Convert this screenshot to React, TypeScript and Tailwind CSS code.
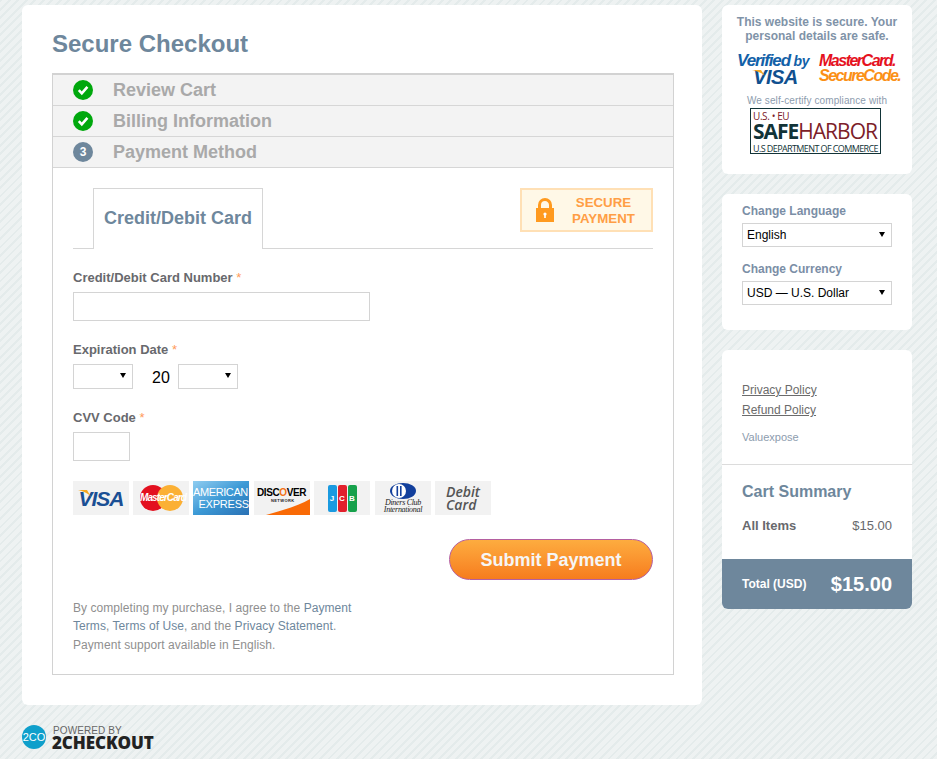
const FONT = "font-['Liberation_Sans',Arial,sans-serif]";

function CheckBadge() {
  return (
    <svg width="20" height="20" viewBox="0 0 20 20" className="shrink-0">
      <circle cx="10" cy="10" r="10" fill="#00a80d" />
      <path d="M5.8 10.2 L8.8 13.4 L14.4 6.9" fill="none" stroke="#fff" strokeWidth="2.6" />
    </svg>
  );
}

function Step({ label, badge }: { label: string; badge: React.ReactNode }) {
  return (
    <div className="h-[31px] bg-[#f3f3f3] border-b border-[#d6d6d6] flex items-center pl-5">
      <div className="w-10 shrink-0">{badge}</div>
      <span className="text-[18px] font-bold text-[#a9a9a9]">{label}</span>
    </div>
  );
}

function Select({ value, className }: { value: string; className: string }) {
  return (
    <div className={`relative ${className}`}>
      <select className="block w-full h-full appearance-none bg-white border border-[#d4d4d4] pl-1 text-[12px] text-black outline-none rounded-none" defaultValue={value}>
        <option value={value}>{value}</option>
      </select>
      <span className="absolute right-[7px] top-[9px] w-0 h-0 border-x-[3.5px] border-x-transparent border-t-[5px] border-t-black pointer-events-none" />
    </div>
  );
}

function Label({ text, req }: { text: string; req?: boolean }) {
  return (
    <div className="text-[13px] font-bold leading-[16px] text-[#68696d]">
      {text}
      {req && <span className="font-normal text-[#ff9a5a]"> *</span>}
    </div>
  );
}

function CardTile({ children, className = 'bg-[#f2f2f2]' }: { children: React.ReactNode; className?: string }) {
  return <div className={`relative w-14 h-[34px] overflow-hidden flex items-center justify-center ${className}`}>{children}</div>;
}

function CardLogos() {
  return (
    <div className="flex gap-1 mt-5">
      <CardTile>
        <span className="text-[21px] leading-none font-bold italic tracking-[-1px] text-[#1a4f94]">VISA</span>
        <svg width="14" height="8" viewBox="0 0 14 8" className="absolute left-[5px] top-[9px]">
          <path d="M0 0 H9 L13 7 C10 3 5 1 0 0Z" fill="#f7a823" />
        </svg>
      </CardTile>
      <CardTile>
        <span className="absolute left-[7px] top-[4px] w-[26px] h-[26px] rounded-full bg-[#e3101f]" />
        <span className="absolute left-[24px] top-[4px] w-[26px] h-[26px] rounded-full bg-[#fbb034]" />
        <span className="absolute left-[7px] top-[11px] text-[10px] leading-[12px] font-bold italic tracking-[-0.9px] text-white">MasterCard</span>
      </CardTile>
      <CardTile className="bg-gradient-to-br from-[#8fcdf0] via-[#3c9ad6] to-[#2b71b4]">
        <div className="absolute left-0 top-[6px] text-[11px] leading-[11px] tracking-[-0.4px] text-white">AMERICAN</div>
        <div className="absolute right-0 top-[18px] text-[11px] leading-[11px] tracking-[-0.2px] text-white">EXPRESS</div>
      </CardTile>
      <CardTile className="bg-[#f2f2f2] ml-px">
        <span className="absolute left-[3px] top-[6px] text-[10px] leading-[11px] font-bold tracking-[-0.4px] text-black">DISC<span className="text-[#f47216]">O</span>VER</span>
        <span className="absolute left-[17px] top-[17px] text-[4px] leading-[5px] font-bold tracking-[0.4px] text-[#222]">NETWORK</span>
        <svg width="56" height="34" viewBox="0 0 56 34" className="absolute inset-0">
          <path d="M12 34 C30 29 46 24 56 18 V34Z" fill="#f96a06" />
        </svg>
      </CardTile>
      <CardTile>
        <div className="flex gap-px">
          <div className="w-[9px] h-[27px] rounded-[2px] bg-[#1a9ae0] text-white text-[8px] leading-[27px] text-center font-bold">J</div>
          <div className="w-[9px] h-[27px] rounded-[2px] bg-[#e2202c] text-white text-[8px] leading-[27px] text-center font-bold">C</div>
          <div className="w-[9px] h-[27px] rounded-[2px] bg-[#16a14b] text-white text-[8px] leading-[27px] text-center font-bold">B</div>
        </div>
      </CardTile>
      <CardTile className="bg-[#f2f2f2] ml-px">
        <svg width="26" height="16" viewBox="0 0 26 16" className="absolute left-[15px] top-[2px]">
          <ellipse cx="13" cy="8" rx="13" ry="8" fill="#123f9c" />
          <circle cx="9" cy="8" r="7" fill="#fff" />
          <rect x="6.5" y="3" width="1.6" height="10" fill="#123f9c" />
          <rect x="10" y="3" width="1.6" height="10" fill="#123f9c" />
        </svg>
        <div className="absolute left-0 right-0 top-[18px] text-center font-['Liberation_Serif',serif] italic text-[8px] leading-[7px] tracking-[-0.3px] text-[#222]">
          Diners Club<br />International
        </div>
      </CardTile>
      <CardTile>
        <div className="font-['Open_Sans',sans-serif] text-[14px] leading-[13px] italic font-semibold text-[#555] text-left">
          Debit<br />Card
        </div>
      </CardTile>
    </div>
  );
}

function TrustCard() {
  return (
    <div className="bg-white rounded-[6px] h-[169px] pt-[10px] flex flex-col items-center">
      <p className="text-[12px] font-bold leading-[14px] text-[#7f93a8] text-center">
        This website is secure. Your<br />personal details are safe.
      </p>
      <div className="flex w-full mt-[10px] pl-[15px] gap-[10px]">
        <div className="w-[72px] text-center">
          <div className="text-[17px] leading-[16px] font-bold italic tracking-[-1.1px] text-[#1261a8] whitespace-nowrap">
            Verified <span className="text-[14px] tracking-[-0.5px]">by</span>
          </div>
          <div className="relative pl-[5px] text-[20px] leading-[17px] font-bold italic tracking-[-0.6px] text-[#10508f]">
            VISA
            <svg width="14" height="6" viewBox="0 0 14 6" className="absolute left-[15px] top-[1px]">
              <path d="M0 0 H9 L13 6 C10 3 5 1 0 0Z" fill="#f7a823" />
            </svg>
          </div>
        </div>
        <div className="w-[78px]">
          <div className="text-[16px] leading-[15px] font-bold italic tracking-[-1.5px] text-[#e5121e] whitespace-nowrap">MasterCard.</div>
          <div className="text-[16px] leading-[15px] font-bold italic tracking-[-1.5px] text-[#fb9016] whitespace-nowrap">SecureCode.</div>
        </div>
      </div>
      <p className="text-[10px] leading-[12px] mt-[9px] tracking-[0.1px] text-[#8d9cae]">We self-certify compliance with</p>
      <div className="mt-[1px] self-start ml-[28px] w-[131px] h-[46px] border border-[#113337] px-[2px] flex flex-col overflow-hidden font-['Open_Sans',sans-serif]">
        <div className="text-[10px] leading-[10px] mt-[2px] text-[#7c2028] tracking-[-0.4px]">U.S. • EU</div>
        <div className="text-[21px] leading-[20px] whitespace-nowrap tracking-[-1px]">
          <span className="font-bold text-[#113337]">SAFE</span>
          <span className="text-[#7c2028]">HARBOR</span>
        </div>
        <div className="mt-[2px] text-[9px] leading-[11px] whitespace-nowrap tracking-[-0.6px] text-[#113337]">U.S DEPARTMENT OF COMMERCE</div>
      </div>
    </div>
  );
}

export default function App() {
  return (
    <div className={`${FONT} w-[937px] h-[759px] overflow-hidden pt-[5px] pl-[22px] bg-[#ecf1f1] bg-[repeating-linear-gradient(135deg,#e4ebeb_0px,#e4ebeb_2px,#eef2f2_2px,#eef2f2_6px)]`}>
      <div className="flex gap-5 items-start">
        {/* Main checkout */}
        <div className="w-[680px] h-[700px] bg-white rounded-[6px] px-[30px] pt-[23px]">
          <h1 className="text-[24px] font-bold leading-[32px] text-[#6e879c]">Secure Checkout</h1>
          <div className="mt-[13px] w-[622px] h-[602px] border border-[#d2d2d2] border-t-2">
            <Step label="Review Cart" badge={<CheckBadge />} />
            <Step label="Billing Information" badge={<CheckBadge />} />
            <Step
              label="Payment Method"
              badge={
                <div className="w-5 h-5 rounded-full bg-[#6e879c] text-white text-[12px] font-bold leading-5 text-center">3</div>
              }
            />
            <div className="px-5 pt-5">
              <div className="flex justify-between items-start border-b border-[#d6d6d6] h-[61px]">
                <div className="ml-5 w-[170px] h-[61px] bg-white border border-b-0 border-[#d6d6d6] text-[18px] font-bold text-[#6e879c] text-center leading-[58px]">
                  Credit/Debit Card
                </div>
                <div className="w-[133px] h-[44px] bg-[#fff8e7] border-2 border-[#ffe0b5] flex items-center pl-[14px]">
                  <svg width="18" height="24" viewBox="0 0 18 24" className="shrink-0">
                    <path d="M3.5 11 V7 a5.5 5.5 0 0 1 11 0 V11" fill="none" stroke="#ff9a1f" strokeWidth="3" />
                    <rect x="0" y="10" width="18" height="14" fill="#ff9a1f" />
                    <circle cx="9" cy="16" r="1.6" fill="#fff" />
                    <rect x="8.2" y="16" width="1.6" height="4" fill="#fff" />
                  </svg>
                  <div className="flex-1 text-center text-[13.3px] leading-[16px] font-bold text-[#ff9e45] pl-[2px] pt-[2px]">
                    SECURE<br />PAYMENT
                  </div>
                </div>
              </div>

              <div className="mt-[21px]"><Label text="Credit/Debit Card Number" req /></div>
              <input className="block mt-[6px] w-[297px] h-[29px] border border-[#d4d4d4] bg-white outline-none" />

              <div className="mt-[21px]"><Label text="Expiration Date" req /></div>
              <div className="flex items-center h-[25px] mt-[6px]">
                <Select value="" className="w-[60px] h-[25px]" />
                <span className="w-[45px] pl-[19px] text-[16px] leading-[24px] text-black pt-[3px]">20</span>
                <Select value="" className="w-[60px] h-[25px]" />
              </div>

              <div className="mt-[21px]"><Label text="CVV Code" req /></div>
              <input className="block mt-[6px] w-[57px] h-[29px] border border-[#d4d4d4] bg-white outline-none" />

              <CardLogos />

              <div className="flex justify-end mt-[24px]">
                <button className="w-[204px] h-[41px] pt-[2px] rounded-full border border-[#b45fa0] bg-gradient-to-b from-[#fdac3f] to-[#f67c1d] text-[18px] font-bold text-[#f6f6f6]">
                  Submit Payment
                </button>
              </div>

              <p className="mt-[19px] text-[12px] leading-[18.4px] tracking-[0.06px] text-[#8f8f8f]">
                By completing my purchase, I agree to the <span className="text-[#6e879c]">Payment</span>
                <br />
                <span className="text-[#6e879c]">Terms</span>, <span className="text-[#6e879c]">Terms of Use</span>, and the <span className="text-[#6e879c]">Privacy Statement</span>.
                <br />
                Payment support available in English.
              </p>
            </div>
          </div>
        </div>

        {/* Right column */}
        <div className="w-[190px] flex flex-col gap-5">
          <TrustCard />

          <div className="bg-white rounded-[6px] h-[136px] px-5 pt-[10px]">
            <div className="text-[12px] font-bold leading-[14px] text-[#7b8ea6]">Change Language</div>
            <Select value="English" className="w-[150px] h-6 mt-[5px]" />
            <div className="text-[12px] font-bold leading-[14px] text-[#7b8ea6] mt-[15px]">Change Currency</div>
            <Select value="USD — U.S. Dollar" className="w-[150px] h-6 mt-[5px]" />
          </div>

          <div className="bg-white rounded-[6px] h-[259px] overflow-hidden flex flex-col">
            <div className="h-[115px] border-b border-[#dcdcdc] px-5 pt-[30px] text-[12px] leading-[20px] text-[#6b6b6b]">
              <div className="underline">Privacy Policy</div>
              <div className="underline">Refund Policy</div>
              <div className="mt-[9px] text-[11px] leading-[16px] text-[#8d9cae]">Valuexpose</div>
            </div>
            <div className="flex-1 px-5 pt-[17px]">
              <div className="text-[16px] font-bold leading-[20px] text-[#6e879c]">Cart Summary</div>
              <div className="flex justify-between items-center mt-[16px] text-[13px] leading-[16px] text-[#68696d]">
                <span className="font-bold">All Items</span>
                <span>$15.00</span>
              </div>
            </div>
            <div className="h-[50px] bg-[#6e879c] flex items-center justify-between px-5 text-white">
              <span className="text-[12px] font-bold">Total (USD)</span>
              <span className="text-[20px] font-bold">$15.00</span>
            </div>
          </div>
        </div>
      </div>

      {/* Footer logo */}
      <div className="flex items-start gap-[6px] mt-[20px]">
        <div className="w-6 h-6 rounded-full overflow-hidden bg-[#0f9fcb] text-white text-[11px] leading-6 text-center">2CO</div>
        <div className="pt-px">
          <div className="text-[10px] leading-[10px] text-[#666] tracking-[0.1px] pl-px">POWERED BY</div>
          <div className="text-[17px] leading-[14px] font-black text-[#222] tracking-[-0.1px] font-['Open_Sans',sans-serif]">2CHECKOUT</div>
        </div>
      </div>
    </div>
  );
}
